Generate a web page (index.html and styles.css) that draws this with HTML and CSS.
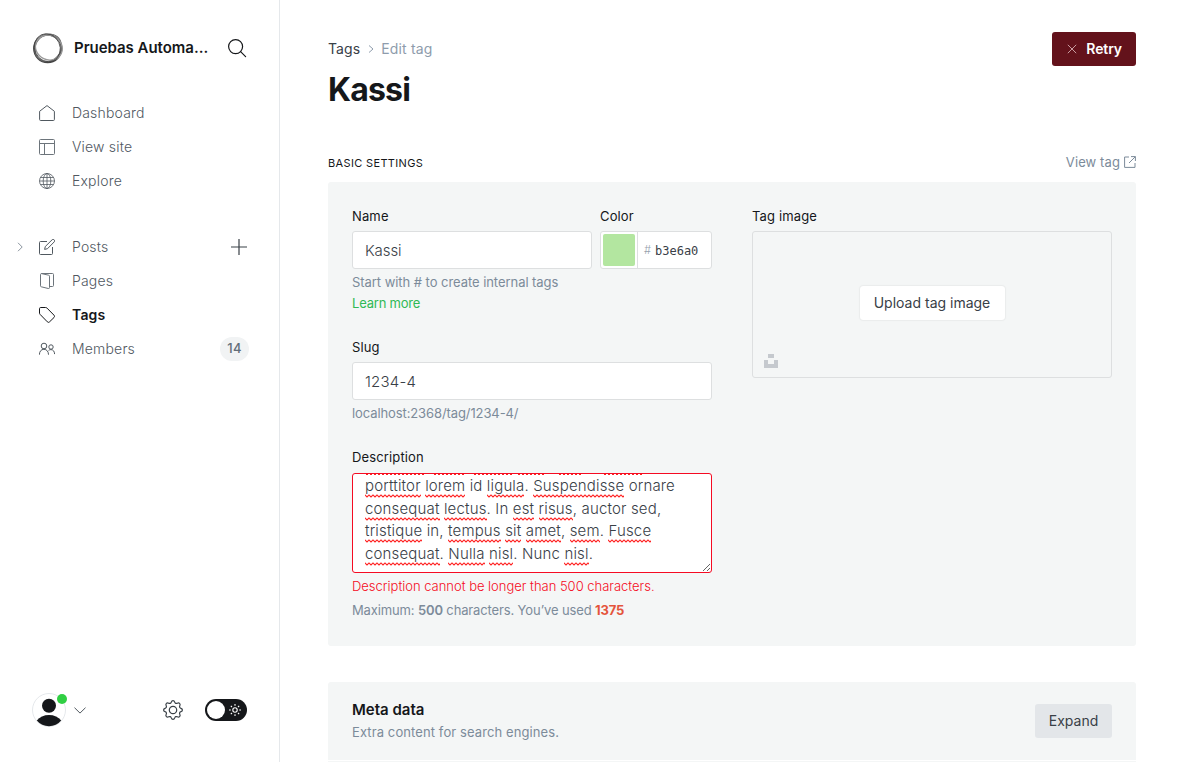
FILE: index.html
```html
<!DOCTYPE html>
<html lang="en">
<head>
<meta charset="utf-8">
<title>Kassi - Edit tag</title>
<link rel="stylesheet" href="styles.css">
</head>
<body>
<div class="app">
  <nav class="sidebar">
    <header class="site-head">
      <svg class="site-logo" viewBox="0 0 32 32" fill="none" stroke="#222"><circle cx="15.7" cy="16.6" r="13.8" stroke-width="1.7" stroke="#444"/><ellipse cx="16.2" cy="16" rx="14.4" ry="12.6" transform="rotate(-52 16 16)" stroke-width="1" stroke="#666"/><ellipse cx="16.6" cy="15.3" rx="13.7" ry="12.2" transform="rotate(25 16 16)" stroke-width="1.4" stroke="#999"/><ellipse cx="15.5" cy="16.5" rx="14.3" ry="12.7" transform="rotate(65 16 16)" stroke-width=".8" stroke="#444"/></svg>
      <span class="site-name">Pruebas Automa...</span>
      <svg class="search" viewBox="0 0 20 20" fill="none" stroke="#15171a" stroke-width="1.2" stroke-linecap="round"><circle cx="8.6" cy="8.6" r="7"/><path d="M13.600 13.600 18.600 18.600"/></svg>
    </header>
    <ul class="nav-list">
      <li class="nav-item"><svg class="nav-icon" viewBox="0 0 16 16"><path d="M.6 6.3 8 .6l7.4 5.7v8.2a1 1 0 0 1-1 1H1.6a1 1 0 0 1-1-1z"/></svg><span>Dashboard</span></li>
      <li class="nav-item"><svg class="nav-icon soft" viewBox="0 0 16 16"><rect x=".5" y=".5" width="15" height="15" rx="1"/><path d="M.5 4.5h15M5.5 4.5v11"/></svg><span>View site</span></li>
      <li class="nav-item"><svg class="nav-icon thin" viewBox="0 0 16 16"><circle cx="8" cy="8" r="7.5"/><ellipse cx="8" cy="8" rx="3.800" ry="7.5"/><path d="M.5 8h15M1.6 4.5h12.8M1.6 11.5h12.8M8 .5v15"/></svg><span>Explore</span></li>
    </ul>
    <ul class="nav-list manage">
      <li class="nav-item"><svg class="expander" viewBox="0 0 6 10"><path d="m1 .8 4.2 4.2L1 9.2"/></svg><svg class="nav-icon" viewBox="0 0 16 16"><path d="M8 2.5H1.5a1 1 0 0 0-1 1v11a1 1 0 0 0 1 1h11a1 1 0 0 0 1-1V8M8.500 9.700l-2.900.7.700-2.900 6.900-6.800a1.500 1.500 0 0 1 2.100 2.100z"/></svg><span>Posts</span><svg class="plus" viewBox="0 0 16 16"><path d="M8 0v16M0 8h16"/></svg></li>
      <li class="nav-item"><svg class="nav-icon soft" viewBox="0 0 16 16"><path d="M10.500 14.500V3.200a1 1 0 0 0-.8-1L2.500.6a1 1 0 0 0-1 1v11.200a1 1 0 0 0 .8 1l7 1.700a1 1 0 0 0 1.200-1zM2.300.5h11.200a1 1 0 0 1 1 1v11a1 1 0 0 1-1 1h-3"/></svg><span>Pages</span></li>
      <li class="nav-item active"><svg class="nav-icon" viewBox="0 0 16 16"><path d="M.5 1.7V6a2 2 0 0 0 .6 1.4l7.2 7.4a1.6 1.6 0 0 0 2.3 0l4.4-4.3a1.6 1.6 0 0 0 0-2.3L8 1.1A2 2 0 0 0 6.6.5H1.7A1.2 1.2 0 0 0 .5 1.7z"/></svg><span>Tags</span></li>
      <li class="nav-item"><svg class="nav-icon" viewBox="0 0 16 16"><circle cx="5" cy="5" r="2.8"/><circle cx="12" cy="6" r="2.2"/><path d="M.4 13.7c0-3.2 1.7-5.4 4.5-5.4s4.6 2.200 4.600 5.400M9.600 9.500c.6-.6 1.400-.9 2.300-.9 2.200 0 3.600 1.700 3.700 4.500"/></svg><span>Members</span><b class="count">14</b></li>
    </ul>
    <footer class="side-foot">
      <div class="avatar"><svg viewBox="0 0 34 34"><circle cx="17" cy="17" r="16.500" fill="#fff" stroke="#e5e8eb"/><circle cx="17" cy="12.700" r="7" fill="#15171a"/><path d="M4.800 27.500C7.500 24 12 22 17 22s9.500 2 12.200 5.500A16 16 0 0 1 17 33.200 16 16 0 0 1 4.800 27.500z" fill="#15171a"/></svg><i class="online"></i></div>
      <svg class="chevron" viewBox="0 0 12 7"><path d="m.5.7 5.500 5.400L11.500.7"/></svg>
      <svg class="gear" viewBox="0 0 20 20"><path d="M8.300 2.100C8.700.7 9.100.6 10 .6s1.300.1 1.700 1.500c.3 1.200 1.500 1.700 2.600 1.100 1.300-.7 1.600-.5 2.300.2s.9 1 .2 2.300c-.6 1.100-.1 2.300 1.100 2.600 1.400.4 1.500.8 1.500 1.700s-.1 1.300-1.500 1.700c-1.200.3-1.700 1.500-1.100 2.600.7 1.300.5 1.600-.2 2.300s-1 .9-2.300.2c-1.100-.6-2.300-.1-2.600 1.100-.4 1.400-.8 1.500-1.700 1.500s-1.300-.1-1.700-1.500c-.3-1.200-1.500-1.700-2.600-1.100-1.300.7-1.600.5-2.300-.2s-.9-1-.2-2.300c.6-1.100.1-2.300-1.100-2.600C.7 11.300.6 10.900.6 10s.1-1.300 1.500-1.700c1.200-.3 1.700-1.500 1.100-2.600-.7-1.300-.5-1.600.2-2.300s1-.9 2.300-.2c1.100.6 2.300.1 2.600-1.100z"/><circle cx="10" cy="10" r="3.700"/></svg>
      <div class="toggle"><i class="knob"></i><svg class="sun" viewBox="0 0 12 12"><circle cx="6" cy="6" r="2.200"/><path d="M6 0v1.800M6 10.200V12M0 6h1.800M10.200 6H12M1.800 1.800 3 3M9 9l1.200 1.200M1.800 10.200 3 9M9 3l1.200-1.200"/></svg></div>
    </footer>
  </nav>
  <main class="main">
    <header class="page-head">
      <div>
        <div class="crumbs"><span>Tags</span><svg viewBox="0 0 6 8"><path d="m1 .5 4 3.500-4 3.500"/></svg><span class="current">Edit tag</span></div>
        <h1>Kassi</h1>
      </div>
      <button class="retry"><svg viewBox="0 0 10 10"><path d="m.8.8 8.400 8.400M9.200.8.8 9.200"/></svg><span>Retry</span></button>
    </header>
    <div class="section-head"><h4>Basic settings</h4><a class="view-tag"><span>View tag</span><svg viewBox="0 0 12 12"><path d="M5 1H.6v10.400H11V7M7 .6h4.400V5M11.300.7 5 7"/></svg></a></div>
    <section class="panel settings">
      <div class="fields">
        <div class="row">
          <div class="field name"><label>Name</label><div class="input">Kassi</div></div>
          <div class="field"><label>Color</label><div class="input color"><i class="swatch"></i><span class="hash">#</span><span class="hex">b3e6a0</span></div></div>
        </div>
        <p class="hint name-hint">Start with # to create internal tags<br><a>Learn more</a></p>
        <div class="field slug"><label>Slug</label><div class="input slug-input">1234-4</div></div>
        <p class="hint url">localhost:2368/tag/1234-4/</p>
        <div class="field description"><label>Description</label><div class="textarea"><svg class="clipped" viewBox="0 0 358 1"><path d="M13 .5h58M81 .5h32M121 .5h40M165 .5h28M206 .5h24M251 .5h39"/></svg><div class="lines"><p><u>porttitor</u> <u>lorem</u> id <u>ligula</u>. <u>Suspendisse</u> ornare</p><p><u>consequat</u> <u>lectus</u>. In <u>est</u> <u>risus</u>, auctor sed,</p><p><u>tristique</u> in, <u>tempus</u> <u>sit</u> <u>amet</u>, <u>sem</u>. <u>Fusce</u></p><p><u>consequat</u>. <u>Nulla</u> <u>nisl</u>. Nunc <u>nisl</u>.</p></div></div></div>
        <p class="hint error">Description cannot be longer than 500 characters.</p>
        <p class="hint max">Maximum: <b>500</b> characters. You’ve used <b class="over">1375</b></p>
      </div>
      <div class="field image"><label>Tag image</label><div class="upload"><button>Upload tag image</button><svg class="unsplash" viewBox="0 0 14 14"><path d="M4 0h6v4H4zM0 6h4v4h6V6h4v8H0z"/></svg></div></div>
    </section>
    <section class="panel meta"><div><h3>Meta data</h3><p>Extra content for search engines.</p></div><button class="expand">Expand</button></section>
    <section class="panel next"></section>
  </main>
</div>
</body>
</html>
```
FILE: styles.css
```css
* { box-sizing: border-box; }
body { margin: 0; font-family: Inter, sans-serif; font-size: 14px; color: #15171a; background: #fff; }
h1, h3, h4, p, ul { margin: 0; padding: 0; }
button { font: inherit; border: 0; border-radius: 3px; padding: 0; }
svg { display: block; flex: none; fill: none; }
.app { display: flex; height: 762px; overflow: hidden; }
.sidebar { width: 280px; flex: none; border-right: 1px solid #e5e8eb; display: flex; flex-direction: column; padding: 32px 32px 35px; }
.site-head { display: flex; align-items: center; height: 32px; }
.site-logo { width: 32px; height: 32px; }
.site-name { margin-left: 10px; width: 153px; font-size: 15px; font-weight: 600; letter-spacing: -.03px; padding-bottom: 2px; white-space: nowrap; }
.search { width: 20px; height: 20px; }
.nav-list { list-style: none; margin-top: 32px; }
.manage { margin-top: 32px; }
.nav-item { position: relative; display: flex; align-items: center; height: 34px; padding-left: 7px; font-size: 14px; letter-spacing: .18px; }
.nav-item > span { margin-left: 17px; flex: 1; color: #50585f; font-weight: 350; padding-bottom: 2px; }
.nav-icon { width: 16px; height: 16px; stroke: #50585f; stroke-width: 1; stroke-linejoin: round; }
.soft { stroke: #6c747b; }
.thin { stroke-width: .8; }
.nav-item.active > span { color: #15171a; font-weight: 600; }
.active .nav-icon { stroke: #15171a; }
.expander { position: absolute; left: -15px; width: 6px; height: 10px; stroke: #8a949e; }
.plus { width: 16px; height: 16px; stroke: #394047; stroke-width: 1.200; }
.count { background: #f1f3f4; color: #626d79; font-weight: 500; font-size: 13px; width: 29px; height: 24px; line-height: 23px; text-align: center; border-radius: 12px; margin-right: -2px; }
.side-foot { margin-top: auto; display: flex; align-items: center; height: 34px; }
.avatar { position: relative; width: 34px; height: 34px; }
.online { position: absolute; left: 25px; top: 1px; width: 10px; height: 10px; border-radius: 50%; background: #30cf43; }
.chevron { width: 12px; height: 7px; margin-left: 8px; stroke: #50585f; }
.gear { width: 20px; height: 20px; margin-left: 77px; stroke: #394047; stroke-width: 1.200; stroke-linejoin: round; }
.toggle { display: flex; align-items: center; justify-content: space-between; margin-left: 22px; width: 42px; height: 22px; border-radius: 11px; background: #15171a; padding: 0 6px 0 2px; }
.knob { width: 18px; height: 18px; border-radius: 50%; background: #fff; }
.sun { width: 12px; height: 12px; stroke: #fff; stroke-width: 1.100; }
.main { width: 808px; margin-left: 48px; }
.page-head { display: flex; justify-content: space-between; align-items: flex-start; padding-top: 32px; height: 149px; }
.crumbs { display: flex; align-items: center; height: 34px; color: #394047; }
.crumbs span { padding-bottom: 1px; letter-spacing: .1px; }
.crumbs svg { width: 6px; height: 8px; margin: 0 7px 0 8px; stroke: #8e9cac; }
.crumbs .current { color: #8e9cac; letter-spacing: .15px; }
h1 { font-size: 32px; line-height: 40px; margin-top: 4px; font-weight: 700; letter-spacing: -.8px; }
.retry { display: flex; align-items: center; justify-content: space-between; width: 84px; height: 34px; padding: 0 14px 0 15px; background: #63121b; color: #fff; font-weight: 600; }
.retry span { padding-bottom: 2px; letter-spacing: -.1px; }
.retry svg { width: 10px; height: 10px; stroke: #c99ca1; }
.section-head { display: flex; justify-content: space-between; align-items: center; height: 28px; margin-bottom: 5px; }
h4 { text-transform: uppercase; font-size: 11px; font-weight: 400; letter-spacing: .35px; }
.view-tag { display: flex; align-items: center; gap: 4px; font-size: 13px; color: #7c8b9a; letter-spacing: .1px; }
.view-tag span { padding-bottom: 2px; }
.view-tag svg { width: 12px; height: 12px; margin-top: -3px; stroke: #7c8b9a; }
.panel { background: #f4f6f6; border-radius: 3px; }
.settings { display: flex; justify-content: space-between; height: 464px; padding: 24px; }
.fields, .image { width: 360px; }
.row { display: flex; gap: 8px; }
.name { width: 240px; }
label { display: block; font-size: 13px; line-height: 20px; margin-bottom: 5px; letter-spacing: .14px; font-weight: 400; }
.input { height: 38px; border: 1px solid #dddfe0; border-radius: 3px; background: #fff; padding-left: 12px; font-size: 15px; line-height: 37px; letter-spacing: -.1px; font-weight: 360; color: #394047; }
.slug-input { letter-spacing: .2px; }
.color { display: flex; align-items: center; width: 112px; padding: 0 0 0 2px; letter-spacing: 0; }
.swatch { width: 32px; height: 32px; border-radius: 2px; background: #b3e6a0; }
.hash { display: flex; align-items: center; align-self: stretch; margin-left: 2px; border-left: 1px solid #dddfe0; padding-left: 6px; font-size: 11px; color: #95a1ad; width: 18px; }
.hex { font-family: "DejaVu Sans Mono", monospace; font-size: 12px; font-weight: 400; padding-top: 2px; }
.hint { font-size: 13px; line-height: 21px; margin-top: 3px; color: #7c8b9a; letter-spacing: -.05px; }
.hint a { color: #30b955; letter-spacing: -.2px; }
.hint.url { letter-spacing: -.1px; }
.slug { margin-top: 23px; }
.description { margin-top: 23px; }
.description label { margin-bottom: 6px; }
.textarea { position: relative; height: 100px; border: 1px solid #f50b23; border-radius: 3px; background: #fff; overflow: hidden; resize: vertical; }
.clipped { position: absolute; top: 0; left: 0; width: 358px; height: 1px; stroke: #f22; stroke-dasharray: 2 2; }
.lines { padding-left: 12px; margin-top: 1px; font-size: 15px; line-height: 22.500px; font-weight: 350; letter-spacing: .16px; color: #394047; }
.lines p { white-space: nowrap; }
.lines u { text-decoration: none; padding-bottom: 3px; background: url("data:image/svg+xml,%3Csvg xmlns='http://www.w3.org/2000/svg' width='4' height='4'%3E%3Cpath d='M-1 0 2 3 5 0' fill='none' stroke='%23f22' stroke-width='1.1'/%3E%3C/svg%3E") repeat-x 0 100%; }
.hint.error { color: #f50b23; letter-spacing: -.02px; font-weight: 350; }
.hint.max { letter-spacing: -.14px; font-weight: 380; }
.hint b { font-weight: 600; }
.hint .over { color: #e4543c; font-weight: 700; }
.upload { display: flex; position: relative; align-items: center; justify-content: center; height: 147px; border: 1px solid #dddfe0; border-radius: 3px; }
.upload button { width: 145px; height: 34px; margin-top: -3px; padding-bottom: 1px; background: #fff; color: #394047; box-shadow: 0 0 2px rgba(0,0,0,.14); }
.unsplash { position: absolute; left: 11px; bottom: 9px; width: 14px; height: 14px; fill: #c5c9ce; }
.meta { display: flex; justify-content: space-between; align-items: center; height: 78px; padding: 0 24px; margin-top: 36px; border-radius: 3px 3px 0 0; }
h3 { font-size: 15px; line-height: 20px; font-weight: 600; }
.meta p { font-size: 13px; line-height: 20px; margin: 2px 0 1px; letter-spacing: .1px; color: #7c8b9a; }
.expand { width: 77px; height: 34px; padding-bottom: 2px; background: #e3e6e9; color: #394047; }
.next { height: 78px; margin-top: 1px; border-radius: 0; }
```
